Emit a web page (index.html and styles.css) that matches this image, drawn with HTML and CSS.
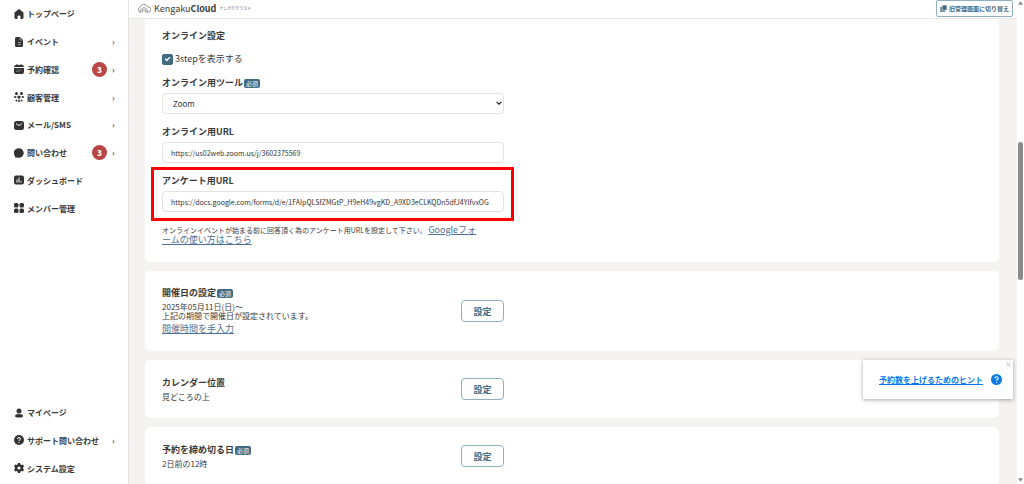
FILE: index.html
```html
<!DOCTYPE html>
<html lang="ja">

<head>
    <meta charset="UTF-8">
    <meta name="viewport" content="width=device-width, initial-scale=1.0">
    <title>KengakuCloud</title>
    <link rel="stylesheet" href="styles.css">
</head>

<body>
    <nav class="sidebar">
        <ul class="menu menu-main">
            <li><a href="#">
                <svg class="icon" viewBox="0 0 20 20"><path d="M10 0 L19 7 V17 Q19 20 16 20 H13 V15 Q13 13 10 13 Q7 13 7 15 V20 H4 Q1 20 1 17 V7 Z"/></svg>
                <span>トップページ</span></a></li>
            <li><a href="#">
                <svg class="icon" viewBox="0 0 20 20"><path d="M5 0 H12 L18 6 V17 Q18 20 15 20 H5 Q2 20 2 17 V3 Q2 0 5 0 Z"/><path class="cut thin" d="M12 1 V6 H17 M8 11 H14 M8 15 H14"/></svg>
                <span>イベント</span><i class="chevron">›</i></a></li>
            <li><a href="#">
                <svg class="icon" viewBox="0 0 20 20"><path d="M4 2 H5 V0 H7 V2 H13 V0 H15 V2 H16 Q20 2 20 6 H0 Q0 2 4 2 Z M0 8 H20 V16 Q20 20 16 20 H4 Q0 20 0 16 Z"/><path class="cut thin" d="M5 12 H7 M9 12 H11 M13 12 H15 M5 15 H7 M9 15 H11"/></svg>
                <span>予約確認</span><b class="count">3</b><i class="chevron">›</i></a></li>
            <li><a href="#">
                <svg class="icon" viewBox="0 0 20 20"><circle cx="10" cy="10" r="3"/><circle cx="5" cy="3" r="3"/><circle cx="15" cy="3" r="3"/><circle cx="2" cy="10" r="2"/><circle cx="18" cy="10" r="2"/><circle cx="5" cy="17" r="2"/><circle cx="10" cy="18" r="2"/><circle cx="15" cy="17" r="2"/><path class="line" d="M2 10 H18 M10 10 V17"/></svg>
                <span>顧客管理</span><i class="chevron">›</i></a></li>
            <li><a href="#">
                <svg class="icon" viewBox="0 0 20 20"><rect x="0" y="2" width="20" height="18" rx="5"/><path class="cut" d="M4 7 Q10 14 16 7"/></svg>
                <span>メール/SMS</span><i class="chevron">›</i></a></li>
            <li><a href="#">
                <svg class="icon" viewBox="0 0 20 20"><path d="M10 1 A9 9 0 0 1 10 19 H4 Q1 19 2 16 A9 9 0 0 1 10 1 Z"/><circle cx="10" cy="10" r="9"/></svg>
                <span>問い合わせ</span><b class="count">3</b><i class="chevron">›</i></a></li>
            <li><a href="#">
                <svg class="icon" viewBox="0 0 20 20"><rect x="0" y="1" width="20" height="18" rx="4"/><path class="cut" d="M6 9 V15 M10 5 V15 M14 12 V15"/></svg>
                <span>ダッシュボード</span></a></li>
            <li><a href="#">
                <svg class="icon" viewBox="0 0 20 20"><rect x="0" y="0" width="9" height="9" rx="3"/><rect x="11" y="0" width="9" height="9" rx="3"/><rect x="0" y="11" width="9" height="9" rx="3"/><rect x="11" y="11" width="9" height="9" rx="3"/></svg>
                <span>メンバー管理</span></a></li>
        </ul>
        <ul class="menu menu-sub">
            <li><a href="#">
                <svg class="icon" viewBox="0 0 20 20"><circle cx="10" cy="6" r="5"/><path d="M10 12 Q18 12 18 16 Q18 19 10 19 Q2 19 2 16 Q2 12 10 12 Z"/></svg>
                <span>マイページ</span></a></li>
            <li><a href="#">
                <svg class="icon" viewBox="0 0 20 20"><circle cx="10" cy="10" r="10"/><path class="cut" d="M7 8 Q7 5 10 5 Q13 5 13 8 Q13 9 10 11 V12 M10 14 V16"/></svg>
                <span>サポート問い合わせ</span><i class="chevron">›</i></a></li>
            <li><a href="#">
                <svg class="icon" viewBox="0 0 20 20"><path fill-rule="evenodd" d="M8 0 H12 L13 3 L15 4 L18 3 L20 7 L18 9 V11 L20 13 L18 17 L15 16 L13 17 L12 20 H8 L7 17 L5 16 L2 17 L0 13 L2 11 V9 L0 7 L2 3 L5 4 L7 3 Z M10 7 A3 3 0 1 0 10 13 A3 3 0 1 0 10 7 Z"/></svg>
                <span>システム設定</span></a></li>
        </ul>
    </nav>

    <div class="page">
        <header class="topbar">
            <a class="logo" href="#">
                <svg class="logo-mark" viewBox="0 0 26 20"><path d="M8 17 H6 A5 5 0 0 1 5 8 A8 8 0 0 1 20 7 A5 5 0 0 1 21 17 H18 M7 17 V12 L13 8 L19 12 V17 M10 17 V13 H16 V17"/></svg>
                <span class="logo-name">Kengaku<b>Cloud</b></span>
                <span class="logo-kana">ケンガククラウド</span>
            </a>
            <button class="switch" type="button">
                <svg class="switch-icon" viewBox="0 0 20 20"><path d="M7 1 H19 V14 H7 Z"/><path d="M1 5 H5 V16 H15 V19 H1 Z"/></svg>
                旧管理画面に切り替え
            </button>
        </header>

        <main class="content">
            <section class="card card-online">
                <h2>オンライン設定</h2>
                <label class="check"><input type="checkbox" checked>3stepを表示する</label>

                <div class="field">
                    <label for="tool">オンライン用ツール<span class="required">必須</span></label>
                    <div class="select">
                        <select id="tool">
                            <option>Zoom</option>
                        </select>
                        <svg class="arrow" viewBox="0 0 10 6"><path d="M1 1 L5 5 L9 1"/></svg>
                    </div>
                </div>

                <div class="field">
                    <label for="onlineUrl">オンライン用URL</label>
                    <input type="text" id="onlineUrl" value="https://us02web.zoom.us/j/3602375569">
                </div>

                <div class="field highlight">
                    <label for="surveyUrl">アンケート用URL</label>
                    <input type="text" id="surveyUrl" value="https://docs.google.com/forms/d/e/1FAIpQLSfZMGtP_H9eH49vgKD_A9XD3eCLKQDn5dfJ4YlfvxOG">
                </div>

                <p class="note">オンラインイベントが始まる前に回答頂く為のアンケート用URLを設定して下さい。 <a href="#">Googleフォ<br>ームの使い方はこちら</a></p>
            </section>

            <section class="card">
                <div class="row">
                    <div>
                        <h2>開催日の設定<span class="required">必須</span></h2>
                        <p>2025年05月11日(日)～<br>上記の期間で開催日が設定されています。</p>
                        <a class="manual" href="#">開催時間を手入力</a>
                    </div>
                    <button class="setting" type="button">設定</button>
                </div>
            </section>

            <section class="card">
                <div class="row">
                    <div>
                        <h2>カレンダー位置</h2>
                        <p>見どころの上</p>
                    </div>
                    <button class="setting" type="button">設定</button>
                </div>
            </section>

            <section class="card">
                <div class="row">
                    <div>
                        <h2>予約を締め切る日<span class="required">必須</span></h2>
                        <p>2日前の12時</p>
                    </div>
                    <button class="setting" type="button">設定</button>
                </div>
            </section>
        </main>
    </div>

    <div class="scrollbar">
        <svg viewBox="0 0 6 4"><path d="M3 0 L6 4 H0 Z"/></svg>
        <div class="track"><div class="thumb"></div></div>
        <svg viewBox="0 0 6 4"><path d="M0 0 H6 L3 4 Z"/></svg>
    </div>

    <aside class="hint">
        <a href="#">予約数を上げるためのヒント</a>
        <svg class="hint-icon" viewBox="0 0 20 20"><circle cx="10" cy="10" r="10"/><path d="M7 8 Q7 5 10 5 Q13 5 13 8 Q13 9 10 11 V12 M10 14 V16"/></svg>
        <button class="close" type="button" aria-label="閉じる"><svg viewBox="0 0 10 10"><path d="M1 1 L9 9 M9 1 L1 9"/></svg></button>
    </aside>
</body>

</html>
```
FILE: styles.css
```css
* {
    box-sizing: border-box;
}

body {
    display: flex;
    height: 100vh;
    margin: 0;
    overflow: hidden;
    background-color: #fff;
    color: #3a3a3a;
    font-family: "Noto Sans CJK JP", sans-serif;
    font-size: 8px;
}

h2,
p,
ul {
    margin: 0;
    padding: 0;
}

button,
input,
select {
    font-family: inherit;
}

/* sidebar */
.sidebar {
    display: flex;
    flex-direction: column;
    justify-content: space-between;
    flex: 0 0 129px;
    padding-bottom: 2px;
    border-right: 1px solid #e2e2e2;
}

.menu {
    display: grid;
    grid-auto-rows: 1fr;
    list-style: none;
}

.menu-main {
    height: 222px;
}

.menu-sub {
    height: 83px;
}

.menu a {
    display: flex;
    align-items: center;
    height: 100%;
    padding: 0 12px 0 14px;
    color: #3a3a3a;
    font-weight: bold;
    text-decoration: none;
}

.icon {
    width: 10px;
    height: 10px;
    margin-right: 3px;
    fill: #333;
}

.icon .cut {
    fill: none;
    stroke: #fff;
    stroke-width: 2;
}

.icon .thin {
    stroke-width: 1;
}

.icon .line {
    stroke: #333;
    stroke-width: 1;
}

.menu span {
    flex: 1;
    white-space: nowrap;
}

.count {
    width: 15px;
    height: 15px;
    margin-right: 5px;
    border-radius: 50%;
    background-color: #b94545;
    color: #fff;
    line-height: 15px;
    text-align: center;
}

.chevron {
    width: 4px;
    color: #555;
    font-family: "Noto Sans", sans-serif;
    font-size: 9px;
    font-style: normal;
    font-weight: normal;
}

/* header */
.page {
    display: flex;
    flex-direction: column;
    flex: 1;
    min-width: 0;
    background-color: #f4f3f1;
}

.topbar {
    display: flex;
    flex: 0 0 19px;
    justify-content: space-between;
    align-items: flex-start;
    padding: 0 4px 0 8px;
    border-bottom: 1px solid #e8e7e5;
    background-color: #fff;
}

.logo {
    display: flex;
    align-items: center;
    height: 16px;
    color: #3a3a3a;
    text-decoration: none;
}

.logo-mark {
    width: 14px;
    height: 11px;
    margin-right: 3px;
    fill: none;
    stroke: #444;
    stroke-width: 1;
}

.logo-name {
    font-size: 9px;
}

.logo-kana {
    margin-left: 3px;
    color: #666;
    font-size: 4px;
}

.switch {
    display: flex;
    align-items: center;
    justify-content: space-between;
    width: 77px;
    height: 17px;
    padding: 0 3px;
    border: 1px solid #8fb0c0;
    border-radius: 2px;
    background-color: #fff;
    color: #3f677d;
    font-size: 6px;
    font-weight: bold;
    white-space: nowrap;
}

.switch-icon {
    width: 7px;
    height: 7px;
    fill: #3f677d;
}

/* cards */
.content {
    display: flex;
    flex-direction: column;
    flex: 1;
    gap: 9px;
    min-height: 0;
    padding: 0 18px 0 16px;
    overflow: hidden;
}

.card {
    display: flex;
    flex: none;
    align-items: center;
    min-height: 58px;
    padding: 16px 17px;
    border-radius: 5px;
    background-color: #fff;
}

.card-online {
    display: block;
    padding: 11px 17px 17px;
    border-radius: 0 0 5px 5px;
}

.card h2,
.field label {
    display: flex;
    align-items: center;
    font-size: 9px;
    font-weight: bold;
    line-height: 12px;
}

.card p {
    line-height: 9px;
}

.card a {
    color: #4d7196;
    font-size: 9px;
}

.required {
    padding: 0 2px;
    margin-left: 1px;
    border-radius: 2px;
    background-color: #416b81;
    color: #fff;
    font-size: 6px;
    font-weight: normal;
    line-height: 9px;
}

.check {
    display: flex;
    align-items: center;
    gap: 2px;
    margin: 11px 0 12px;
    font-size: 9px;
    line-height: 12px;
}

.check input {
    display: grid;
    place-items: center;
    width: 11px;
    height: 11px;
    margin: 0;
    border: 1px solid #416b81;
    border-radius: 2px;
    appearance: none;
}

.check input:checked {
    background-color: #416b81;
}

.check input:checked::before {
    content: "";
    width: 6px;
    height: 5px;
    background-color: #fff;
    clip-path: polygon(0 50%, 15% 30%, 38% 60%, 85% 0, 100% 18%, 40% 100%);
}

.field {
    max-width: 342px;
    margin-bottom: 12px;
}

.field input,
.field select {
    display: block;
    width: 100%;
    height: 21px;
    margin-top: 4px;
    padding: 0 8px;
    border: 1px solid #e3e3e1;
    border-radius: 4px;
    background-color: #fff;
    color: #333;
    font-size: 7px;
}

.field select {
    padding: 0 10px;
    font-size: 8px;
    appearance: none;
}

.select {
    position: relative;
}

.arrow {
    position: absolute;
    top: 8px;
    right: 2px;
    width: 6px;
    height: 4px;
    fill: none;
    stroke: #222;
    stroke-width: 2;
    pointer-events: none;
}

.highlight {
    max-width: 363px;
    margin: -8px -11px 4px;
    padding: 5px 7px 6px 8px;
    border: 3px solid #f00;
}

.card .note {
    font-size: 7px;
    line-height: 10px;
    white-space: nowrap;
}

.row {
    display: flex;
    flex: 0 1 342px;
    align-items: center;
    justify-content: space-between;
}

.row p {
    margin-top: 3px;
}

.manual {
    display: block;
    margin-top: 3px;
    line-height: 12px;
}

.setting {
    width: 43px;
    height: 22px;
    padding: 0;
    border: 1px solid #8fb0c0;
    border-radius: 4px;
    background-color: #fff;
    color: #3f677d;
    font-size: 9px;
    font-weight: bold;
}

/* scrollbar */
.scrollbar {
    display: flex;
    flex-direction: column;
    flex: 0 0 7px;
    padding: 1px 1px 2px;
}

.scrollbar svg {
    width: 5px;
    height: 4px;
    fill: #888;
}

.track {
    display: grid;
    flex: 1;
    grid-template-rows: 137fr 138fr 198fr;
}

.thumb {
    grid-row: 2;
    border-radius: 3px;
    background-color: #8b8b8b;
}

/* hint popup */
.hint {
    position: absolute;
    right: 11px;
    bottom: 85px;
    display: flex;
    align-items: center;
    justify-content: space-between;
    width: 150px;
    height: 39px;
    padding: 0 11px 0 16px;
    background-color: #fff;
    box-shadow: 0 1px 4px rgba(0, 0, 0, 0.35);
}

.hint a {
    color: #0b7bea;
    font-weight: bold;
}

.hint-icon {
    width: 11px;
    height: 11px;
    fill: #0b7bea;
}

.hint-icon path {
    fill: none;
    stroke: #fff;
    stroke-width: 2;
}

.close {
    position: absolute;
    top: 2px;
    right: 2px;
    display: flex;
    padding: 0;
    border: none;
    background: none;
}

.close svg {
    width: 5px;
    height: 5px;
    stroke: #888;
}
```
